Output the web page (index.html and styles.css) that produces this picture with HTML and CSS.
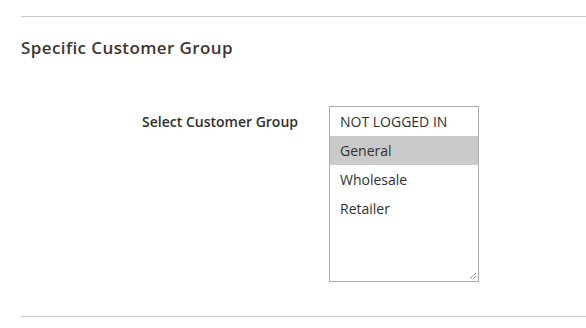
FILE: index.html
```html
<!DOCTYPE html>
<html lang="en">
<head>
    <meta charset="UTF-8">
    <title>Specific Customer Group</title>
    <link rel="stylesheet" href="styles.css">
</head>
<body>
<div class="fieldset">
    <h2 class="fieldset-title">Specific Customer Group</h2>

    <div class="field">
        <label class="field-label" for="customerGroup">Select Customer Group</label>
        <div class="field-control">
            <div class="multiselect" id="customerGroup">
                <div class="option">NOT LOGGED IN</div>
                <div class="option selected">General</div>
                <div class="option">Wholesale</div>
                <div class="option">Retailer</div>
                <svg class="grip" width="8" height="8" viewBox="0 0 8 8">
                    <path d="M7 1 L1 7 M7 4 L4 7" stroke="#555" stroke-width="1" stroke-dasharray="1 1"/>
                </svg>
            </div>
        </div>
    </div>
</div>
</body>
</html>
```

FILE: styles.css
```css
body {
    margin: 0;
    background: #fff;
    font-family: 'Open Sans', 'Liberation Sans', sans-serif;
    color: #303030;
}

.fieldset {
    margin: 16px 0 0 21px;
    border-top: 1px solid #ccc;
    border-bottom: 1px solid #ccc;
    padding: 19px 0 34px;
}

.fieldset-title {
    margin: 0;
    font-size: 17px;
    font-weight: 600;
    letter-spacing: 0.4px;
    line-height: 24px;
    color: #41362f;
}

.field {
    display: flex;
    align-items: flex-start;
    margin-top: 46px;
}

.field-label {
    width: 277px;
    text-align: right;
    font-size: 14px;
    font-weight: 600;
    line-height: 18px;
    padding-top: 7px;
}

.field-control {
    margin-left: 31px;
}

.multiselect {
    position: relative;
    width: 148px;
    height: 174px;
    border: 1px solid #adadad;
    background: #fff;
}

.option {
    height: 29px;
    line-height: 29px;
    padding-left: 10px;
    font-size: 14px;
    color: #303030;
}

.option.selected {
    background: #cacaca;
}

.grip {
    position: absolute;
    right: 1px;
    bottom: 1px;
}
```
